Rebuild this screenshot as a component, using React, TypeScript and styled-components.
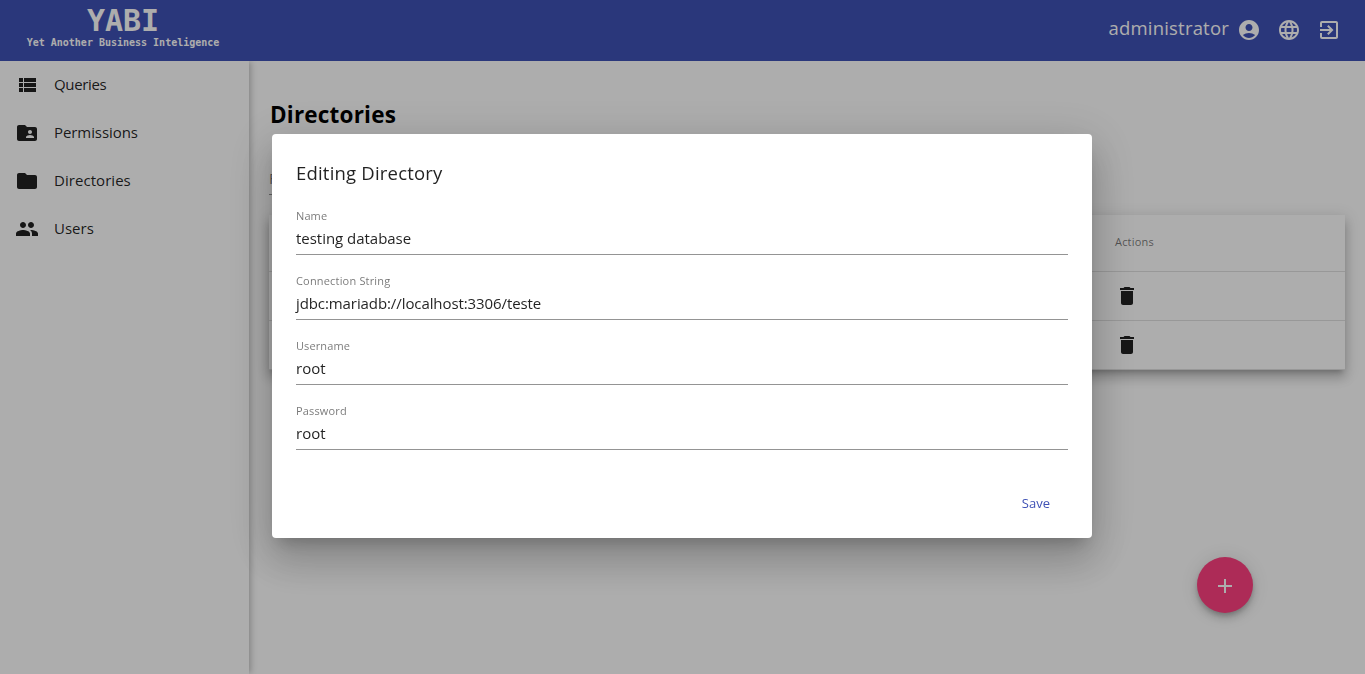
import React from "react";
import styled, { createGlobalStyle } from "styled-components";
import {
  MdFolderShared,
  MdFolder,
  MdPeople,
  MdAccountCircle,
  MdLanguage,
  MdExitToApp,
  MdDelete,
} from "react-icons/md";

const GlobalStyle = createGlobalStyle`
  *, *::before, *::after { box-sizing: border-box; }
  html, body, #root { height: 100%; }
  body {
    margin: 0;
    overflow: hidden;
    background: #fff;
    color: rgba(0, 0, 0, 0.87);
    font-family: "Open Sans", "Noto Sans", sans-serif;
  }
`;

const Page = styled.div`
  display: flex;
  flex-direction: column;
  height: 100vh;
`;

const Header = styled.header`
  display: flex;
  justify-content: space-between;
  flex: none;
  height: 61px;
  padding: 0 24px 0 27px;
  background: #3f51b5;
  color: #fff;
`;

const Brand = styled.div`
  display: flex;
  flex-direction: column;
  align-items: center;
  width: 192px;
  font-family: "DejaVu Sans Mono", monospace;
  font-weight: 700;
  white-space: nowrap;
`;

const BrandName = styled.span`
  margin-top: 5px;
  font-size: 30px;
  line-height: 32px;
`;

const BrandTagline = styled.span`
  font-size: 10px;
  line-height: 12px;
`;

const UserTools = styled.div`
  display: flex;
  align-items: center;
  gap: 16px;
  height: 60px;
  font-size: 24px;
  svg { display: block; }
`;

const Account = styled.div`
  display: flex;
  align-items: center;
  gap: 8px;
`;

const AccountName = styled.span`
  margin-top: -4px;
  font-size: 18.5px;
  line-height: 24px;
  letter-spacing: 0.2px;
`;

const Body = styled.div`
  display: flex;
  flex: 1;
  min-height: 0;
  overflow: hidden;
`;

const Sidebar = styled.nav`
  position: relative;
  z-index: 1;
  flex: none;
  width: 249px;
  background: #fff;
  box-shadow: 3px 0 6px -1px rgba(0, 0, 0, 0.24);
`;

const NavItem = styled.a`
  display: flex;
  align-items: center;
  gap: 15px;
  height: 48px;
  padding-left: 15px;
  font-size: 24px;
`;

const NavLabel = styled.span<{ $spacing: number }>`
  margin-top: -2px;
  font-size: 15px;
  line-height: 24px;
  letter-spacing: ${(p) => p.$spacing}px;
`;

const Main = styled.main`
  flex: 1;
  padding: 37px 20px 0;
`;

const PageTitle = styled.h2`
  margin: 0 0 0 1px;
  color: #000;
  font-size: 22.5px;
  font-weight: 700;
  line-height: 34px;
  letter-spacing: 0.2px;
`;

const Filter = styled.input`
  display: block;
  width: 180px;
  height: 63px;
  margin: 0 0 20px;
  padding: 30px 0 0;
  border: 0;
  border-bottom: 1px solid rgba(0, 0, 0, 0.42);
  background: none;
  font: 15px/24px "Open Sans", sans-serif;
  &::placeholder {
    color: rgba(0, 0, 0, 0.54);
    opacity: 1;
  }
`;

const Table = styled.div`
  background: #fff;
  box-shadow: 0 5px 5px -3px rgba(0, 0, 0, 0.2), 0 8px 10px 1px rgba(0, 0, 0, 0.14),
    0 3px 14px 2px rgba(0, 0, 0, 0.12);
`;

const TableRow = styled.div<{ $height: number }>`
  display: grid;
  grid-template-columns: 822px 1fr;
  align-items: center;
  height: ${(p) => p.$height}px;
  padding: 0 24px;
  border-bottom: 1px solid rgba(0, 0, 0, 0.12);
  font-size: 14px;
  svg { display: block; }
`;

const ColumnName = styled.span`
  margin-top: -3px;
  color: rgba(0, 0, 0, 0.54);
  font-size: 11px;
  letter-spacing: 0.2px;
`;

const AddButton = styled.button`
  position: fixed;
  right: 112px;
  bottom: 61px;
  display: flex;
  align-items: center;
  justify-content: center;
  width: 56px;
  height: 56px;
  padding: 2px 0 0;
  border: 0;
  border-radius: 50%;
  background: #ff4081;
  color: #fff;
  box-shadow: 0 3px 5px -1px rgba(0, 0, 0, 0.2), 0 6px 10px 0 rgba(0, 0, 0, 0.14),
    0 1px 18px 0 rgba(0, 0, 0, 0.12);
`;

const Backdrop = styled.div`
  position: fixed;
  inset: 0;
  z-index: 10;
  display: flex;
  align-items: center;
  justify-content: center;
  padding: 0 1px 2px 0;
  background: rgba(0, 0, 0, 0.32);
`;

const Dialog = styled.section`
  display: flex;
  flex-direction: column;
  width: 820px;
  height: 404px;
  padding: 23px 24px 0;
  border-radius: 4px;
  background: #fff;
  box-shadow: 0 11px 15px -7px rgba(0, 0, 0, 0.2), 0 24px 38px 3px rgba(0, 0, 0, 0.14),
    0 9px 46px 8px rgba(0, 0, 0, 0.12);
`;

const DialogTitle = styled.h1`
  margin: 0;
  font-size: 18.5px;
  font-weight: 400;
  line-height: 32px;
  letter-spacing: 0.2px;
`;

const Field = styled.label`
  display: flex;
  flex: none;
  flex-direction: column;
  height: 65px;
  padding-top: 18px;
  border-bottom: 1px solid rgba(0, 0, 0, 0.42);

  &:first-of-type {
    height: 66px;
    padding-top: 19px;
  }
`;

const FieldLabel = styled.span<{ $spacing: number }>`
  color: rgba(0, 0, 0, 0.54);
  font-size: 11px;
  line-height: 16px;
  letter-spacing: ${(p) => p.$spacing}px;
`;

const FieldValue = styled.span<{ $spacing: number }>`
  margin-top: 2px;
  font-size: 15px;
  line-height: 24px;
  letter-spacing: ${(p) => p.$spacing}px;
`;

const DialogActions = styled.div`
  display: flex;
  justify-content: flex-end;
  margin-top: 35px;
  padding-right: 18px;
`;

const SaveButton = styled.button`
  padding: 0;
  border: 0;
  background: none;
  color: #3f51b5;
  font: 500 13px/36px "Open Sans", sans-serif;
`;

const ListIcon = () => (
  <svg width="24" height="24" viewBox="0 0 24 24" fill="currentColor">
    <path d="M4 14h4v-4H4v4zm0 5h4v-4H4v4zM4 9h4V5H4v4zm5 5h12v-4H9v4zm0 5h12v-4H9v4zM9 5v4h12V5H9z" />
  </svg>
);

const navigation = [
  { label: "Queries", icon: ListIcon, spacing: -0.35 },
  { label: "Permissions", icon: MdFolderShared, spacing: -0.08 },
  { label: "Directories", icon: MdFolder, spacing: 0.05 },
  { label: "Users", icon: MdPeople, spacing: 0 },
];

const fields = [
  { label: "Name", value: "testing database", labelSpacing: 0.1, spacing: -0.03 },
  { label: "Connection String", value: "jdbc:mariadb://localhost:3306/teste", labelSpacing: 0.18, spacing: -0.09 },
  { label: "Username", value: "root", labelSpacing: 0.1, spacing: 0 },
  { label: "Password", value: "root", labelSpacing: 0.15, spacing: 0 },
];

export default function App() {
  return (
    <>
      <GlobalStyle />
      <Page>
        <Header>
          <Brand>
            <BrandName>YABI</BrandName>
            <BrandTagline>Yet Another Business Inteligence</BrandTagline>
          </Brand>
          <UserTools>
            <Account>
              <AccountName>administrator</AccountName>
              <MdAccountCircle />
            </Account>
            <MdLanguage />
            <MdExitToApp />
          </UserTools>
        </Header>
        <Body>
          <Sidebar>
            {navigation.map(({ label, icon: Icon, spacing }) => (
              <NavItem key={label}>
                <Icon />
                <NavLabel $spacing={spacing}>{label}</NavLabel>
              </NavItem>
            ))}
          </Sidebar>
          <Main>
            <PageTitle>Directories</PageTitle>
            <Filter placeholder="Filter" />
            <Table>
              <TableRow $height={57}>
                <span />
                <ColumnName>Actions</ColumnName>
              </TableRow>
              {[0, 1].map((row) => (
                <TableRow key={row} $height={49}>
                  <span />
                  <MdDelete size={24} />
                </TableRow>
              ))}
            </Table>
          </Main>
        </Body>
      </Page>
      <AddButton aria-label="Add directory">
        <svg width="24" height="24" viewBox="0 0 24 24" fill="currentColor">
          <path d="M19 13h-6v6h-2v-6H5v-2h6V5h2v6h6v2z" />
        </svg>
      </AddButton>
      <Backdrop>
        <Dialog role="dialog" aria-label="Editing Directory">
          <DialogTitle>Editing Directory</DialogTitle>
          {fields.map((f) => (
            <Field key={f.label}>
              <FieldLabel $spacing={f.labelSpacing}>{f.label}</FieldLabel>
              <FieldValue $spacing={f.spacing}>{f.value}</FieldValue>
            </Field>
          ))}
          <DialogActions>
            <SaveButton>Save</SaveButton>
          </DialogActions>
        </Dialog>
      </Backdrop>
    </>
  );
}
